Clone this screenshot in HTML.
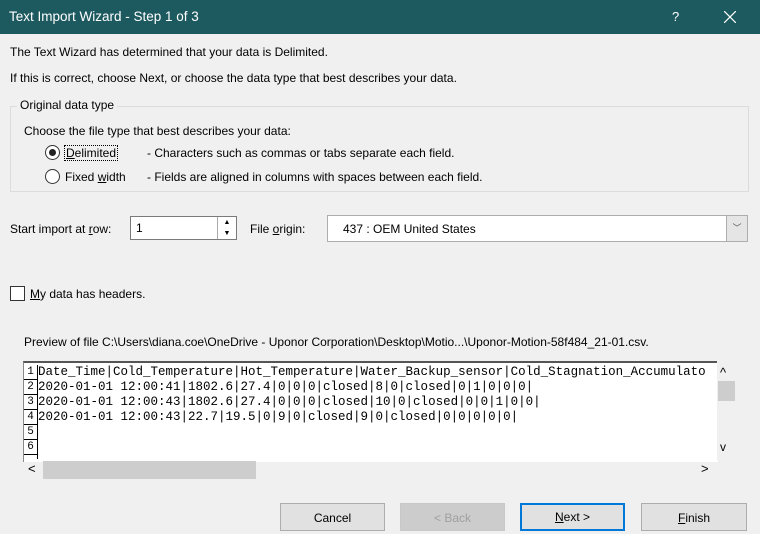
<!DOCTYPE html>
<html><head><style>
body{margin:0;width:760px;height:534px;background:#f0f0f0;font-family:"Liberation Sans",sans-serif;font-size:12px;color:#000;position:relative;overflow:hidden}
.a{position:absolute;white-space:nowrap}
.title{left:0;top:0;width:760px;height:34px;background:#1d5a60;color:#fff}
.btn{position:absolute;top:503px;height:28px;width:105px;border:1px solid #adadad;background:#e1e1e1;text-align:center;line-height:28px;box-sizing:border-box}
.mono{font-family:"Liberation Mono",monospace;font-size:12.5px}
.row{position:absolute;left:38px;height:15px;line-height:15px}
.num{position:absolute;left:24px;width:13px;height:14px;border-right:1px solid #000;border-bottom:1px solid #000;font-size:11px;line-height:14px;text-align:center}
</style></head><body>
<div class="a title"><span class="a" style="left:9px;top:9px;font-size:13.5px">Text Import Wizard - Step 1 of 3</span><span class="a" style="left:672px;top:9px;font-size:13px">?</span><svg class="a" style="left:724px;top:11px" width="12" height="12"><path d="M0 0L12 12M12 0L0 12" stroke="#fff" stroke-width="1.2"/></svg></div>
<div class="a" style="left:10px;top:45px">The Text Wizard has determined that your data is Delimited.</div>
<div class="a" style="left:10px;top:71px">If this is correct, choose Next, or choose the data type that best describes your data.</div>
<div class="a" style="left:10px;top:106px;width:737px;height:84px;border:1px solid #dcdcdc"></div>
<div class="a" style="left:17px;top:98px;background:#f0f0f0;padding:0 3px">Original data type</div>
<div class="a" style="left:24px;top:124px">Choose the file type that best describes your data:</div>
<div class="a" style="left:45px;top:145px;width:13px;height:13px;border:1px solid #333;border-radius:50%;background:#fff"><div style="margin:3px;width:7px;height:7px;border-radius:50%;background:#222"></div></div>
<div class="a" style="left:64px;top:145px;border:1px dotted #000;padding:0 1px"><u>D</u>elimited</div>
<div class="a" style="left:147px;top:146px">- Characters such as commas or tabs separate each field.</div>
<div class="a" style="left:45px;top:169px;width:13px;height:13px;border:1px solid #333;border-radius:50%;background:#fff"></div>
<div class="a" style="left:65px;top:170px">Fixed <u>w</u>idth</div>
<div class="a" style="left:147px;top:170px">- Fields are aligned in columns with spaces between each field.</div>
<div class="a" style="left:10px;top:222px">Start import at <u>r</u>ow:</div>
<div class="a" style="left:130px;top:216px;width:107px;height:24px;border:1px solid #7a7a7a;background:#fff;box-sizing:border-box"><span class="a" style="left:5px;top:4px">1</span><div class="a" style="right:0;top:0;width:18px;height:22px;border-left:1px solid #aaa;font-size:7px;text-align:center;line-height:11px">▲<br>▼</div></div>
<div class="a" style="left:250px;top:222px">File <u>o</u>rigin:</div>
<div class="a" style="left:327px;top:215px;width:421px;height:27px;border:1px solid #adadad;background:#fff;box-sizing:border-box"><span class="a" style="left:15px;top:6px">437 : OEM United States</span><div class="a" style="right:0;top:0;width:20px;height:25px;background:#e5e5e5;border-left:1px solid #adadad;text-align:center;line-height:25px;font-size:9px;color:#555">﹀</div></div>
<div class="a" style="left:10px;top:286px;width:13px;height:13px;border:1px solid #333;background:#fff"></div>
<div class="a" style="left:30px;top:287px"><u>M</u>y data has headers.</div>
<div class="a" style="left:24px;top:335px">Preview of file C:\Users\diana.coe\OneDrive - Uponor Corporation\Desktop\Motio...\Uponor-Motion-58f484_21-01.csv.</div>
<div class="a" style="left:23px;top:361px;width:694px;height:99px;border-top:2px solid #555;border-left:1px solid #888;background:#fff;overflow:hidden">
</div>
<div class="a mono" style="left:0;top:0">
<div class="num" style="top:365px">1</div><div class="row" style="top:365px">Date_Time|Cold_Temperature|Hot_Temperature|Water_Backup_sensor|Cold_Stagnation_Accumulato</div>
<div class="num" style="top:380px">2</div><div class="row" style="top:380px">2020-01-01 12:00:41|1802.6|27.4|0|0|0|closed|8|0|closed|0|1|0|0|0|</div>
<div class="num" style="top:395px">3</div><div class="row" style="top:395px">2020-01-01 12:00:43|1802.6|27.4|0|0|0|closed|10|0|closed|0|0|1|0|0|</div>
<div class="num" style="top:410px">4</div><div class="row" style="top:410px">2020-01-01 12:00:43|22.7|19.5|0|9|0|closed|9|0|closed|0|0|0|0|0|</div>
<div class="num" style="top:425px">5</div><div class="num" style="top:440px">6</div><div class="num" style="top:455px;height:4px;border-bottom:0"></div>
</div>
<div class="a" style="left:717px;top:361px;width:19px;height:99px;background:#f0f0f0"></div>
<div class="a" style="left:720px;top:365px;font-size:13px">^</div>
<div class="a" style="left:718px;top:381px;width:17px;height:20px;background:#cdcdcd"></div>
<div class="a" style="left:720px;top:440px;font-size:12px">v</div>
<div class="a" style="left:28px;top:461px;font-size:13px">&lt;</div>
<div class="a" style="left:43px;top:461px;width:213px;height:18px;background:#cdcdcd"></div>
<div class="a" style="left:701px;top:461px;font-size:13px">&gt;</div>
<div class="btn" style="left:280px">Cancel</div>
<div class="btn" style="left:400px;color:#a0a0a0;border-color:#c8c8c8;background:#ccc">&lt; Back</div>
<div class="btn" style="left:520px;border:2px solid #0078d7;line-height:24px"><u>N</u>ext &gt;</div>
<div class="btn" style="left:641px;width:106px"><u>F</u>inish</div>
</body></html>
